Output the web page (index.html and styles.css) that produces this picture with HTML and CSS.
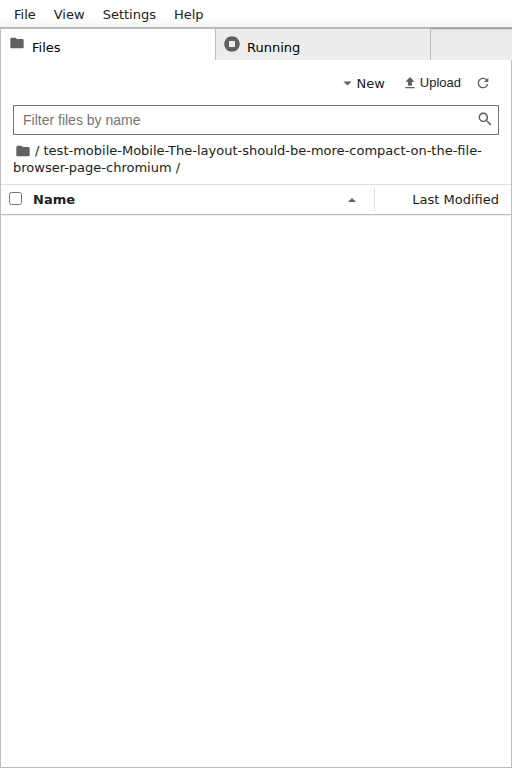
FILE: index.html
```html
<!DOCTYPE html>
<html lang="en">
<head>
<meta charset="utf-8">
<title>Files</title>
<link rel="stylesheet" href="styles.css">
</head>
<body>
<nav class="menu"><span>File</span><span>View</span><span>Settings</span><span>Help</span></nav>
<div class="tabs">
  <div class="tab active">
    <svg class="folder" viewBox="0 0 24 24"><path d="M10 4H4c-1.1 0-1.99.9-1.99 2L2 18c0 1.1.9 2 2 2h16c1.1 0 2-.9 2-2V8c0-1.1-.9-2-2-2h-8l-2-2z"/></svg>
    <span>Files</span>
  </div>
  <div class="tab">
    <svg class="running" viewBox="0 0 512 512"><path d="M256 8C119 8 8 119 8 256s111 248 248 248 248-111 248-248S393 8 256 8zm96 328c0 8.800-7.200 16-16 16H176c-8.800 0-16-7.200-16-16V176c0-8.800 7.200-16 16-16h160c8.800 0 16 7.200 16 16v160z"/></svg>
    <span>Running</span>
  </div>
  <div class="rest"></div>
</div>
<main class="panel">
  <div class="toolbar">
    <div class="new"><svg viewBox="0 0 18 18"><path d="M4 6.500h10l-5 5z"/></svg><span>New</span></div>
    <div class="upload"><svg viewBox="0 0 24 24"><path d="M9 16h6v-6h4l-7-7-7 7h4zm-4 2h14v2H5z"/></svg><span>Upload</span></div>
    <svg class="refresh" viewBox="0 0 18 18"><path d="M9 13.500c-2.490 0-4.500-2.010-4.500-4.500S6.510 4.500 9 4.500c1.240 0 2.360.520 3.170 1.330L10 8h5V3l-1.760 1.760C12.150 3.680 10.660 3 9 3 5.690 3 3.010 5.690 3.010 9S5.690 15 9 15c2.970 0 5.430-2.160 5.900-5h-1.520c-.460 2-2.240 3.500-4.380 3.500z"/></svg>
  </div>
  <div class="filter">
    <input type="text" placeholder="Filter files by name" aria-label="Filter files by name">
    <svg viewBox="0 0 18 18"><path d="M12.100 10.900h-.700l-.200-.200c.800-.900 1.300-2.200 1.300-3.500 0-3-2.400-5.400-5.400-5.400S1.800 4.200 1.800 7.100s2.400 5.400 5.400 5.400c1.300 0 2.500-.500 3.500-1.300l.200.200v.700l4.100 4.100 1.200-1.200-4.100-4.100zm-5 0c-2.100 0-3.700-1.700-3.700-3.700s1.700-3.700 3.700-3.700 3.700 1.700 3.700 3.700-1.600 3.700-3.700 3.700z"/></svg>
  </div>
  <div class="crumbs"><svg class="folder" viewBox="0 0 24 24"><path d="M10 4H4c-1.100 0-1.990.900-1.990 2L2 18c0 1.100.900 2 2 2h16c1.100 0 2-.900 2-2V8c0-1.100-.900-2-2-2h-8l-2-2z"/></svg>/ test-mobile-Mobile-The-layout-should-be-more-compact-on-the-file-browser-page-chromium /</div>
  <div class="head">
    <input type="checkbox" aria-label="Select all">
    <b>Name</b>
    <svg viewBox="0 0 18 18"><path d="M4.500 11.300h9L9 6.800z"/></svg>
    <div class="modified">Last Modified</div>
  </div>
  <div class="listing"></div>
</main>
</body>
</html>
```
FILE: styles.css
```css
* { box-sizing: border-box; }
html, body { height: 100%; }
body {
  margin: 0;
  display: flex;
  flex-direction: column;
  overflow: hidden;
  background: #fff;
  color: #212121;
  font: 13px/17px "DejaVu Sans", sans-serif;
}
svg { display: block; flex: none; fill: #616161; }
.menu {
  height: 28px;
  flex: none;
  display: flex;
  gap: 18px;
  padding: 6px 14px 0;
  border-bottom: 1px solid #b8b8b8;
  background: linear-gradient(#fff 18px, #f4f4f4 27px);
}
.tabs { height: 32px; flex: none; display: flex; }
.tab {
  width: 215px;
  display: flex;
  gap: 7px;
  padding-left: 8px;
  border-top: 1px solid #bdbdbd;
  background: #ededed;
  color: #000;
}
.tab.active {
  width: 216px;
  border-left: 1px solid #bdbdbd;
  border-right: 1px solid #bdbdbd;
  background: #fff;
}
.tab:not(.active) { width: 214px; }
.tab span { margin-top: 10px; }
.folder { width: 16px; height: 16px; }
.tab .folder { margin-top: 6px; }
.running { width: 16px; height: 16px; margin-top: 7px; }
.rest {
  flex: 1;
  border-left: 1px solid #bdbdbd;
  border-top: 1px solid #999;
  background: linear-gradient(#ddd, #ededed 3px);
}
.panel {
  flex: 1;
  display: flex;
  flex-direction: column;
  border: 1px solid #bdbdbd;
  border-top: 0;
}
.toolbar {
  height: 45px;
  flex: none;
  display: flex;
  align-items: center;
  justify-content: flex-end;
  padding-right: 20px;
}
.new, .upload { display: flex; align-items: center; }
.new { gap: 1px; margin-right: 17px; padding-top: 1px; }
.new svg { width: 15px; height: 15px; }
.upload { gap: 2px; margin-right: 14px; font-family: "Liberation Sans", sans-serif; }
.upload svg, .refresh { width: 16px; height: 16px; }
.filter {
  height: 30px;
  flex: none;
  display: flex;
  align-items: center;
  margin: 0 12px;
  padding: 0 5px 0 9px;
  border: 1px solid #757575;
}
.filter input {
  flex: 1;
  min-width: 0;
  padding: 0;
  border: 0;
  outline: 0;
  background: none;
  font: 14px "Liberation Sans", sans-serif;
}
.filter input::placeholder { color: #757575; }
.filter svg { width: 16px; height: 16px; margin-bottom: 2px; }
.crumbs { height: 49px; flex: none; padding: 7px 12px 0; }
.crumbs .folder { display: inline-block; margin: 0 4px 0 2px; vertical-align: -4px; }
.head {
  height: 31px;
  flex: none;
  display: flex;
  align-items: center;
  border-top: 1px solid #e0e0e0;
  border-bottom: 1px solid #bdbdbd;
  padding-right: 12px;
}
.head input { width: 13px; height: 13px; margin: 0 11px 2px 8px; }
.head b { flex: 1; }
.head svg { width: 16px; height: 16px; margin-right: 14px; }
.modified {
  width: 125px;
  height: 23px;
  line-height: 23px;
  border-left: 1px solid #e0e0e0;
  text-align: right;
}
.listing { flex: 1; border-top: 1px solid #eee; }
```
